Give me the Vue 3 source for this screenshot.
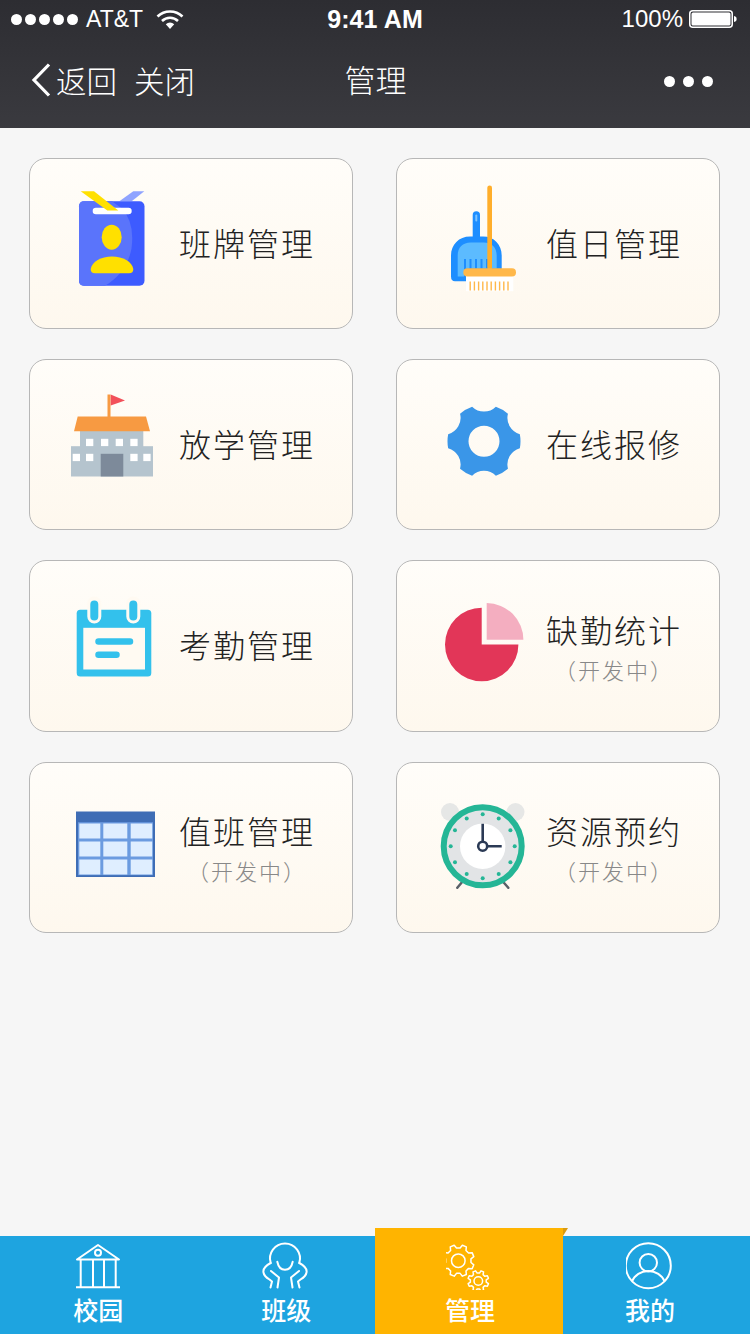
<template>
  <div class="page">
    <header class="top">
      <div class="status">
        <div class="status-left">
          <span class="signal"><i v-for="n in 5" :key="n"></i></span>
          <span class="carrier">AT&amp;T</span>
          <svg class="wifi" viewBox="0 0 28 20">
            <path d="M1.500 7.500a18 18 0 0 1 25 0" fill="none" stroke="#fff" stroke-width="2.600" />
            <path d="M6 12a11.600 11.600 0 0 1 16 0" fill="none" stroke="#fff" stroke-width="2.600" />
            <path d="M9.800 15.200a6 6 0 0 1 8.400 0L14 20z" fill="#fff" />
          </svg>
        </div>
        <div class="time">9:41 AM</div>
        <div class="status-right">
          <span>100%</span>
          <svg class="battery" viewBox="0 0 48 20">
            <rect x="0.750" y="1.750" width="42.500" height="16.500" rx="3" fill="none" stroke="#fff" stroke-width="1.500" />
            <rect x="2.500" y="3.500" width="39" height="13" rx="1.500" fill="#fff" />
            <path d="M45 7c2 .3 2.600 1.500 2.600 3S47 12.700 45 13z" fill="#fff" />
          </svg>
        </div>
      </div>
      <nav class="nav">
        <div class="nav-left">
          <svg class="chevron" viewBox="0 0 20 34">
            <path d="M18 1.500 3 17l15 15.500" fill="none" stroke="#fff" stroke-width="3.200" />
          </svg>
          <span class="back">返回</span>
          <span class="close">关闭</span>
        </div>
        <div class="nav-title">管理</div>
        <div class="nav-more"><i></i><i></i><i></i></div>
      </nav>
    </header>

    <main class="grid">
      <div v-for="card in cards" :key="card.key" class="card">
        <!-- 图标的 viewBox 直接按页面坐标画 -->
        <svg class="card-icon" :viewBox="card.box">
          <template v-if="card.key === 'badge'">
            <path d="M119.300 200.700 133.300 190.700H144.300L131.700 200.700z" fill="#8fa3ff" />
            <rect x="79" y="200.700" width="65.500" height="84.600" rx="5" fill="#3d5bff" />
            <path d="M84 200.700H112L122 208Q135 222 131.500 248Q127 272 105 285.300H84Q79 285.300 79 280V206Q79 200.700 84 200.700z" fill="#5a74fb" />
            <rect x="92.700" y="207.300" width="39" height="6.400" rx="3.200" fill="#fff" />
            <path d="M80.700 190.700H94L118.300 210H107.300z" fill="#ffe000" />
            <ellipse cx="111.700" cy="236.700" rx="10" ry="12.500" fill="#ffe000" />
            <path d="M90.700 268.500C92 261 101 256 112 256S132 261 133.300 268.500Q133.500 272.700 129 272.700H95Q90.500 272.700 90.700 268.500z" fill="#ffe000" />
          </template>

          <template v-else-if="card.key === 'broom'">
            <path d="M472.700 238V214.400a3.650 3.650 0 0 1 7.300 0V238z" fill="#1e8eff" />
            <rect x="475.300" y="214" width="2" height="7" rx="1" fill="#7cc4ff" />
            <path d="M451 276V255c0-11 8-19 19-19h13c11 0 18.700 8 18.700 19v15H470v10.700H455q-4 0-4-4.700z" fill="#1e8eff" />
            <path d="M457.700 276V255c0-8 5-13 13-13h13c8 0 13 5 13 13v13H464v8z" fill="#5cbbff" />
            <rect v-for="x in [464, 469.500, 475, 480.500, 486]" :key="x" :x="x" y="258.500" width="2" height="10" fill="#1e8eff" />
            <rect x="487.300" y="185" width="4.700" height="84" rx="2.300" fill="#ffae2b" />
            <rect x="466" y="275" width="47.300" height="15.700" fill="#fff" />
            <rect x="463.300" y="267.700" width="52.700" height="8.300" rx="4" fill="#ffb84a" />
            <rect v-for="n in 10" :key="n" :x="469.500 + (n - 1) * 4.200" y="281" width="1.400" height="9" fill="#ffb84a" />
          </template>

          <template v-else-if="card.key === 'school'">
            <rect x="107.500" y="394" width="3" height="23" fill="#f79a42" />
            <path d="M110.700 394 125 400 110.700 405z" fill="#f2505a" />
            <rect x="80" y="430" width="63.300" height="17" fill="#b5c4ce" />
            <rect x="71" y="445.700" width="82" height="30.300" fill="#b5c4ce" />
            <path d="M77.700 416H146L150 430.700H74z" fill="#f79a42" />
            <rect v-for="x in [86, 101, 115.700, 130.300]" :key="x" :x="x" y="438.300" width="7.300" height="7.300" fill="#fff" />
            <rect v-for="x in [72.700, 86, 130.300, 143.300]" :key="x" :x="x" y="453.300" width="7.300" height="7.300" fill="#fff" />
            <rect x="100.700" y="453.300" width="22.600" height="22.700" fill="#7d8a9a" />
          </template>

          <template v-else-if="card.key === 'gear'">
            <path :d="settingPath" fill="#3a96e8" fill-rule="evenodd" />
          </template>

          <template v-else-if="card.key === 'calendar'">
            <rect x="76.700" y="609.300" width="74.600" height="66.700" rx="3.500" fill="#33c1ec" />
            <rect x="83.300" y="627.300" width="61.700" height="41.700" fill="#fffaf2" />
            <g stroke-linecap="round">
              <path d="M94.300 603v13M133.300 603v13" stroke="#fffaf2" stroke-width="14" />
              <path d="M94.300 604v12M133.300 604v12" stroke="#33c1ec" stroke-width="8" />
              <path d="M98.500 641h31.500M98.500 654.300h18" stroke="#33c1ec" stroke-width="6.500" />
            </g>
          </template>

          <template v-else-if="card.key === 'pie'">
            <path d="M481.700 607.300V644H518.400A36.700 36.700 0 1 1 481.700 607.300z" fill="#e23658" />
            <path d="M486.700 602.600V639.300H523.400A36.700 36.700 0 0 0 486.700 602.600z" fill="#f4aec0" />
          </template>

          <template v-else-if="card.key === 'table'">
            <rect x="76" y="812" width="79" height="65.500" fill="#3f6db5" />
            <rect x="78" y="822.700" width="75" height="53" fill="#6b9be0" />
            <g fill="#dfeeff">
              <template v-for="y in [824, 842, 860]" :key="y">
                <rect x="79.300" :y="y" width="21" height="15" />
                <rect x="103.300" :y="y" width="24" height="15" />
                <rect x="130.700" :y="y" width="21.500" height="15" />
              </template>
            </g>
          </template>

          <template v-else-if="card.key === 'clock'">
            <circle cx="450" cy="812.500" r="9" fill="#e6e7e6" />
            <circle cx="515.500" cy="812.500" r="9" fill="#e6e7e6" />
            <path d="M457.300 888.300 461.700 883M508.300 888.300 503.700 883" stroke="#5a6068" stroke-width="2.500" stroke-linecap="round" />
            <circle cx="482.700" cy="846.700" r="39" fill="#e2e4e6" stroke="#25b696" stroke-width="6" />
            <circle cx="482.700" cy="846.700" r="22.700" fill="#fff" />
            <circle v-for="tick in clockTicks" :key="tick.x" :cx="tick.x" :cy="tick.y" r="2" fill="#25b696" />
            <path d="M482.700 824.300V842M488 846.700H501.700" stroke="#2b3a55" stroke-width="2.600" fill="none" />
            <circle cx="482.700" cy="846.700" r="4.500" fill="#fff" stroke="#2b3a55" stroke-width="2.600" />
          </template>
        </svg>
        <div class="card-text" :class="{ single: !card.wip }">
          <div class="card-title">{{ card.title }}</div>
          <div v-if="card.wip" class="card-sub">（开发中）</div>
        </div>
      </div>
    </main>

    <footer class="tabbar">
      <div class="tab tab-school">
        <svg class="tab-icon" viewBox="75 1242 48 48">
          <g fill="none" stroke="#fff" stroke-width="2">
            <path d="M78 1259.500 99 1245l21 14.500z" stroke-linejoin="round" />
            <circle cx="99" cy="1252.700" r="3" />
            <path d="M81.700 1259.500v27.800M94 1259.500v27.800M105 1259.500v27.800M116.700 1259.500v27.800M77 1287.300h44" />
          </g>
        </svg>
        <span>校园</span>
      </div>
      <div class="tab tab-class">
        <svg class="tab-icon" viewBox="262 1242 48 48">
          <g fill="none" stroke="#fff" stroke-width="2" stroke-linecap="round" stroke-linejoin="round">
            <path d="M270.700 1263a15 15 0 1 1 28.600 0" />
            <path d="M277.300 1261.700c1 5 4 8 7.700 8s6.700-3 7.700-8" />
            <path d="M270.700 1263c-5.700 3-7.700 7-7.200 9.500.5 3.500 3.500 5.500 6 7l2.500 2-1.500 6M271 1271l8 6.500-1.500 10" />
            <path d="M299.300 1263c5.700 3 7.700 7 7.200 9.500-.5 3.500-3.500 5.500-6 7l-2.500 2 1.500 6M299 1271l-8 6.500 1.500 10" />
          </g>
        </svg>
        <span>班级</span>
      </div>
      <div class="tab tab-active">
        <i class="fold"></i>
        <svg class="tab-icon" viewBox="446 1242 48 48">
          <g fill="none" stroke="#fff" stroke-width="1.500" stroke-linejoin="round">
            <path :d="bigGear" />
            <circle cx="458.300" cy="1260.700" r="6.800" />
            <path :d="smallGear" />
            <circle cx="478.300" cy="1281" r="4.300" />
          </g>
        </svg>
        <span>管理</span>
      </div>
      <div class="tab tab-mine">
        <svg class="tab-icon" viewBox="626 1242 48 48">
          <g fill="none" stroke="#fff" stroke-width="2">
            <circle cx="648.300" cy="1265.700" r="22.500" />
            <circle cx="648.300" cy="1262.700" r="8.700" />
            <path d="M632 1281.500c2.500-6.500 9-10.500 16.300-10.500s13.800 4 16.300 10.500" />
          </g>
        </svg>
        <span>我的</span>
      </div>
    </footer>
  </div>
</template>

<script setup>
const cards = [
  { key: 'badge', title: '班牌管理', box: '63 188.500 100 110' },
  { key: 'broom', title: '值日管理', box: '430 188.500 100 110' },
  { key: 'school', title: '放学管理', box: '63 389.500 100 110' },
  { key: 'gear', title: '在线报修', box: '430 389.500 100 110' },
  { key: 'calendar', title: '考勤管理', box: '63 590.500 100 110' },
  { key: 'pie', title: '缺勤统计', box: '430 590.500 100 110', wip: true },
  { key: 'table', title: '值班管理', box: '63 792.500 100 110', wip: true },
  { key: 'clock', title: '资源预约', box: '430 792.500 100 110', wip: true },
];

const polar = (cx, cy, r, deg) => {
  const a = (deg * Math.PI) / 180;
  return `${(cx + r * Math.cos(a)).toFixed(2)} ${(cy + r * Math.sin(a)).toFixed(2)}`;
};

// 蓝色设置图标：六个齿，齿间是内凹圆弧
function buildSetting(cx, cy) {
  const arc = 'A17 17 0 0 0 ';
  let d = '';
  for (let i = 0; i < 6; i++) {
    const a = i * 60;
    d += `${i ? arc : 'M'}${polar(cx, cy, 36.5, a - 11)}`;
    d += `A36.500 36.500 0 0 1 ${polar(cx, cy, 36.5, a + 11)}`;
  }
  d += `${arc}${polar(cx, cy, 36.5, -11)}Z`;
  d += `M${cx - 15.5} ${cy}a15.500 15.500 0 1 0 31 0a15.500 15.500 0 1 0 -31 0Z`;
  return d;
}

// 底部 tab 的线框齿轮
function buildGear(cx, cy, rOut, rIn, teeth, start = 0) {
  const step = 360 / teeth;
  let d = '';
  for (let i = 0; i < teeth; i++) {
    const a = start + i * step;
    d += `${i ? 'L' : 'M'}${polar(cx, cy, rIn, a - step * 0.32)}`;
    d += `L${polar(cx, cy, rOut, a - step * 0.17)}`;
    d += `L${polar(cx, cy, rOut, a + step * 0.17)}`;
    d += `L${polar(cx, cy, rIn, a + step * 0.32)}`;
  }
  return d + 'Z';
}

const settingPath = buildSetting(484, 440.7);
const bigGear = buildGear(458.3, 1260.7, 16, 12.8, 8, 22.5);
const smallGear = buildGear(478.3, 1281, 10.5, 8, 8, 22.5);

const clockTicks = Array.from({ length: 12 }, (_, i) => {
  const a = (i * 30 * Math.PI) / 180;
  return { x: 482.7 + 32 * Math.cos(a), y: 846.7 + 32 * Math.sin(a) };
});
</script>

<style>
html,
body {
  margin: 0;
  background: #f6f6f6;
}
</style>

<style scoped>
.page {
  width: 750px;
  height: 1334px;
  display: flex;
  flex-direction: column;
  overflow: hidden;
  background: #f6f6f6;
  font-family: "Noto Sans CJK SC", "Liberation Sans", sans-serif;
}

.top {
  height: 128px;
  flex: none;
  color: #fff;
  background: linear-gradient(180deg, #2d2d32, #3a3a3f);
}

.status {
  height: 38px;
  padding: 0 13px;
  display: grid;
  grid-template-columns: 1fr auto 1fr;
  align-items: center;
  font-family: "Liberation Sans", sans-serif;
  font-size: 24px;
}

.status-left {
  display: flex;
  align-items: center;
  margin-left: -2px;
}

.signal {
  display: flex;
  gap: 3px;
  margin-right: 8px;
}

.signal i {
  width: 11px;
  height: 11px;
  border-radius: 50%;
  background: #fff;
}

.carrier {
  font-size: 23px;
}

.wifi {
  width: 28px;
  height: 20px;
  margin-left: 13px;
}

.time {
  font-size: 25px;
  font-weight: 700;
  letter-spacing: 0.1px;
}

.status-right {
  display: flex;
  align-items: center;
  justify-content: flex-end;
  gap: 6px;
}

.battery {
  width: 48px;
  height: 20px;
}

.nav {
  height: 84px;
  padding: 0 37px 0 32px;
  display: grid;
  grid-template-columns: 1fr auto 1fr;
  align-items: center;
}

.nav-left {
  display: flex;
  align-items: center;
  font-size: 30.5px;
  font-weight: 300;
}

.chevron {
  width: 20px;
  height: 34px;
  margin-right: 5px;
  margin-left: -1px;
}

.close {
  margin-left: 17px;
}

.nav-title {
  font-size: 31px;
  font-weight: 300;
  margin-bottom: 4px;
  margin-left: 6px;
}

.nav-more {
  display: flex;
  justify-content: flex-end;
  gap: 8px;
  margin-top: 2px;
}

.nav-more i {
  width: 11px;
  height: 11px;
  border-radius: 50%;
  background: #fff;
}

.grid {
  flex: 1;
  padding: 30px 30px 0 29px;
  display: grid;
  grid-template-columns: 324px 324px;
  grid-auto-rows: 171.2px;
  column-gap: 43px;
  row-gap: 30px;
  align-content: start;
}

.card {
  box-sizing: border-box;
  display: flex;
  align-items: center;
  border: 1px solid #b7b7b7;
  border-radius: 17px;
  background: linear-gradient(180deg, #fffdf9, #fef8ee);
}

.card-icon {
  width: 100px;
  height: 110px;
  flex: none;
  margin-left: 33px;
  margin-right: 16px;
  overflow: visible;
}

.card-text {
  display: flex;
  flex-direction: column;
  align-items: center;
  width: 136px;
}

.card-text.single {
  margin-bottom: 4px;
}

.card-title {
  font-size: 32px;
  line-height: 44px;
  font-weight: 300;
  letter-spacing: 2px;
  color: #222;
  white-space: nowrap;
}

.card-sub {
  font-size: 22px;
  line-height: 32px;
  margin-top: 2px;
  font-weight: 300;
  letter-spacing: 2px;
  color: #888;
  white-space: nowrap;
}

.tabbar {
  height: 98px;
  flex: none;
  display: flex;
  color: #fff;
  background: #1ea4e0;
  font-size: 25px;
  font-weight: 500;
}

.tab {
  box-sizing: border-box;
  width: 187.5px;
  padding-top: 6px;
  display: flex;
  flex-direction: column;
  align-items: center;
}

.tab span {
  line-height: 36px;
  margin-top: 1px;
}

.tab-icon {
  width: 48px;
  height: 48px;
}

.tab-school {
  padding-left: 9px;
}

.tab-class {
  padding-left: 10px;
}

.tab-active {
  position: relative;
  width: 188px;
  height: 106px;
  margin-top: -8px;
  padding-top: 14px;
  padding-left: 2px;
  background: #ffb400;
}

.fold {
  position: absolute;
  top: 0;
  right: -5px;
  width: 0;
  height: 0;
  border-left: 5px solid #d99a10;
  border-bottom: 8px solid transparent;
}

.tab-mine {
  flex: 1;
  padding-right: 13px;
}
</style>
